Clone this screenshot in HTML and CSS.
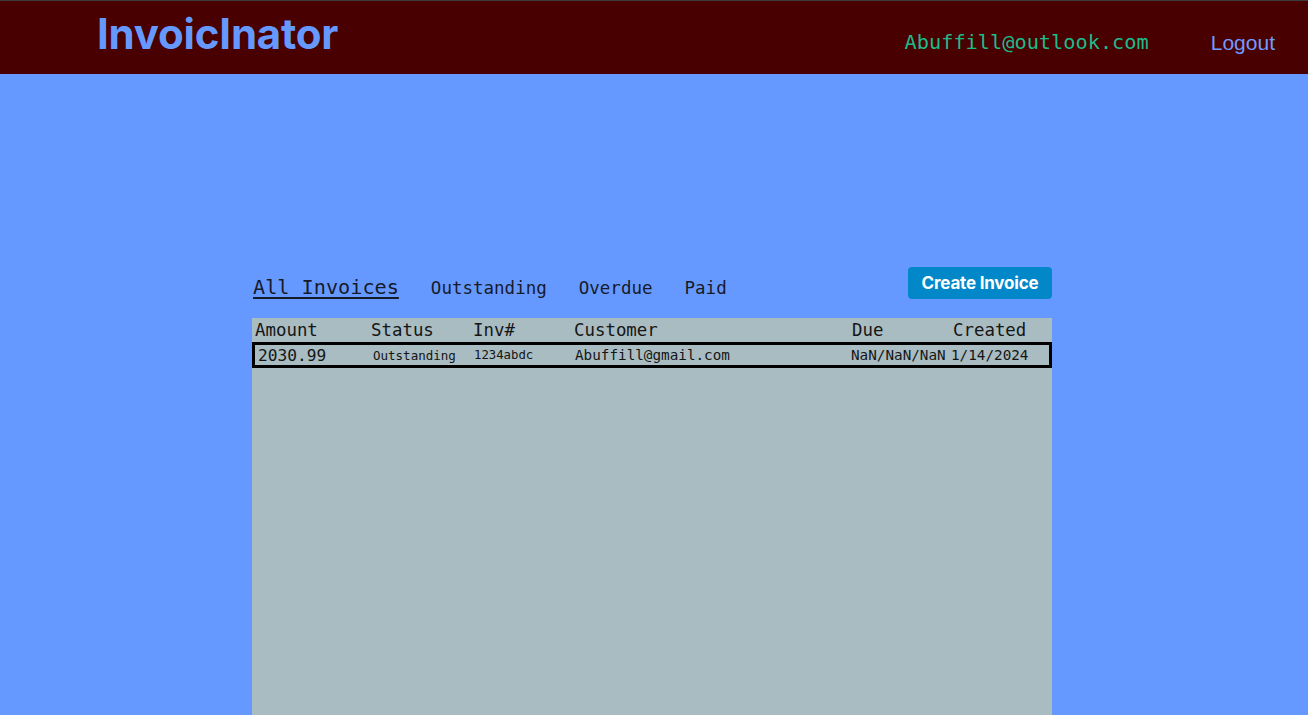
FILE: index.html
```html
<!DOCTYPE html>
<html lang="en">
<head>
<meta charset="utf-8">
<title>InvoicInator</title>
<link rel="stylesheet" href="styles.css">
</head>
<body>
<header class="topbar">
  <div class="brand">InvoicInator</div>
  <div class="user">
    <span class="email">Abuffill@outlook.com</span>
    <a class="logout" href="#">Logout</a>
  </div>
</header>
<main class="content">
  <div class="toolbar">
    <nav class="tabs">
      <a class="tab active" href="#">All Invoices</a>
      <a class="tab" href="#">Outstanding</a>
      <a class="tab" href="#">Overdue</a>
      <a class="tab" href="#">Paid</a>
    </nav>
    <button class="create">Create Invoice</button>
  </div>
  <section class="panel">
    <div class="row head">
      <span>Amount</span>
      <span>Status</span>
      <span>Inv#</span>
      <span>Customer</span>
      <span class="due">Due</span>
      <span>Created</span>
    </div>
    <div class="row item">
      <span class="amount">2030.99</span>
      <span class="status">Outstanding</span>
      <span class="inv">1234abdc</span>
      <span class="cust">Abuffill@gmail.com</span>
      <span class="date">NaN/NaN/NaN</span>
      <span class="date">1/14/2024</span>
    </div>
  </section>
</main>
</body>
</html>
```

FILE: styles.css
```css
* { box-sizing: border-box; }
html, body { margin: 0; padding: 0; }
body {
  background: #6699ff;
  font-family: "DejaVu Sans Mono", monospace;
  overflow: hidden;
  height: 715px;
}
.topbar {
  height: 74px;
  background: #480000;
  border-top: 1px solid #3c3c3c;
  display: flex;
  align-items: center;
  justify-content: space-between;
  padding: 0 33px 0 97px;
}
.brand {
  font-family: "Inter", "Liberation Sans", sans-serif;
  font-weight: 700;
  font-size: 42px;
  color: #6699ff;
  margin-top: -8px;
  letter-spacing: -0.2px;
}
.user {
  display: flex;
  align-items: center;
  gap: 62px;
  margin-top: 8px;
}
.email {
  font-family: "DejaVu Sans Mono", monospace;
  font-size: 20.3px;
  color: #1dbb8c;
}
.logout {
  font-family: "Liberation Sans", Arial, sans-serif;
  font-size: 21px;
  color: #6f9bff;
  text-decoration: none;
  margin-top: 2px;
}
.content {
  width: 800px;
  margin: 193px auto 0;
  position: relative;
  left: -2px;
}
.toolbar {
  display: flex;
  justify-content: space-between;
  align-items: flex-start;
  height: 51px;
}
.tabs {
  display: flex;
  align-items: baseline;
  gap: 32px;
  padding-top: 8px;
  padding-left: 1px;
}
.tab {
  color: #161b2a;
  text-decoration: none;
  font-size: 17.5px;
}
.tab.active {
  font-size: 20.2px;
  text-decoration: underline;
  text-underline-offset: 3px;
  text-decoration-thickness: 2px;
}
.create {
  font-family: "Inter", "Liberation Sans", sans-serif;
  font-weight: 700;
  font-size: 17px;
  color: #ffffff;
  background: #0288c8;
  border: none;
  border-radius: 4px;
  width: 144px;
  height: 32px;
  padding: 0;
  letter-spacing: -0.2px;
}
.panel {
  background: #a8bcc2;
  height: 420px;
}
.row {
  display: grid;
  align-items: center;
  color: #151515;
}
.row.head {
  grid-template-columns: 116px 102px 101px 278px 101px 1fr;
  height: 24px;
  padding-left: 3px;
  font-size: 17.4px;
}
.row.item {
  grid-template-columns: 115px 101px 101px 276px 100px 1fr;
  height: 26px;
  border: 3px solid #000000;
  padding-left: 3px;
  font-size: 14.3px;
}
.amount { font-size: 16.2px; }
.status { font-size: 12.5px; }
.inv { font-size: 12.3px; }
```
